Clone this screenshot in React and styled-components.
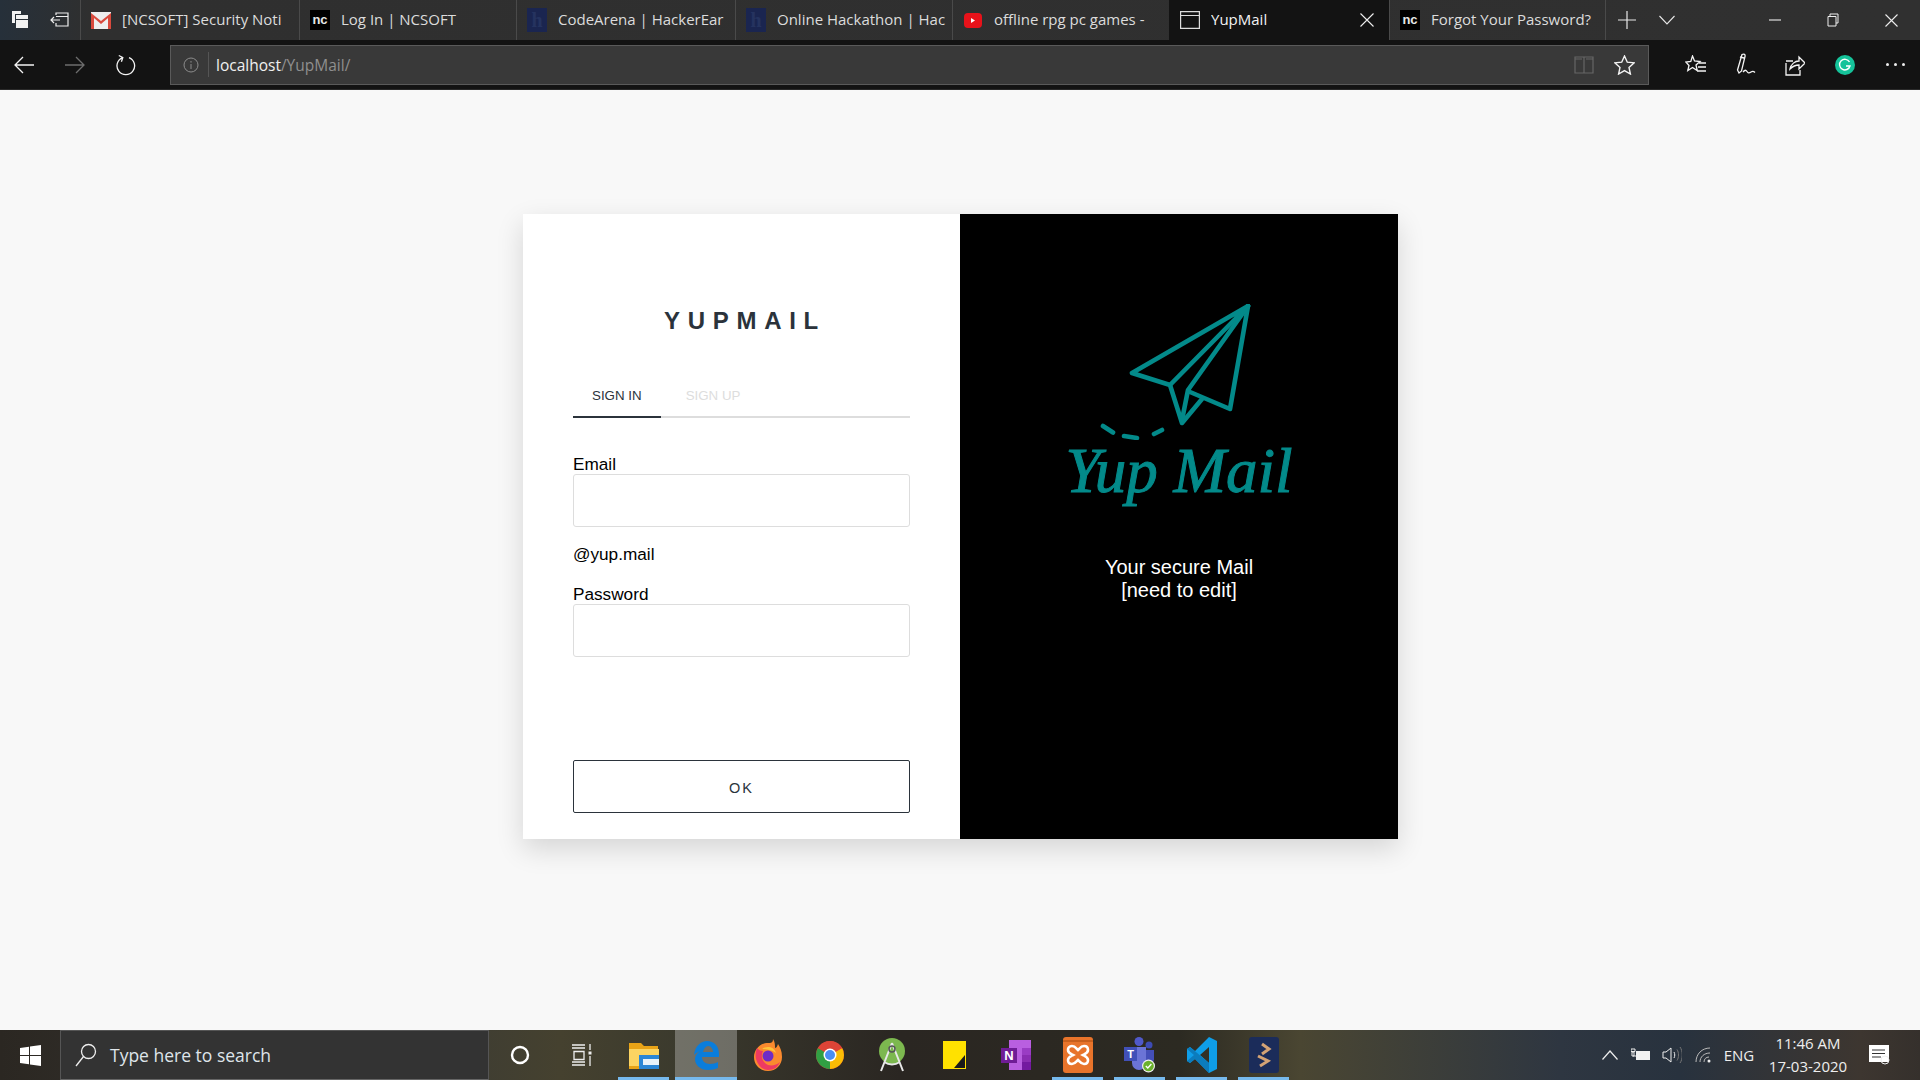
import React from 'react';
import styled, { createGlobalStyle } from 'styled-components';

const tabs = [
  { title: '[NCSOFT] Security Noti', icon: 'gmail', width: 219 },
  { title: 'Log In | NCSOFT', icon: 'nc', width: 217 },
  { title: 'CodeArena | HackerEar', icon: 'h', width: 219 },
  { title: 'Online Hackathon | Hac', icon: 'h', width: 217 },
  { title: 'offline rpg pc games -', icon: 'yt', width: 217 },
  { title: 'YupMail', icon: 'page', width: 220, active: true },
  { title: 'Forgot Your Password?', icon: 'nc', width: 216 },
];

export default function App() {
  return (
    <>
      <GlobalStyle />
      <Screen>
        <TabBar>
          <TabTools>
            <ToolIcon>
              <svg width="20" height="20" viewBox="0 0 20 20">
                <path d="M2 1h9v3H5v9H2z" fill="#f2f2f2" />
                <path d="M6 5h12v4H6zM6 10h12v8H6z" fill="#f2f2f2" />
              </svg>
            </ToolIcon>
            <ToolIcon>
              <svg width="20" height="20" viewBox="0 0 20 20" fill="none" stroke="#eee" strokeWidth="1.2">
                <path d="M6 5V3h12v13H6v-3M6 6.5h12M1 10h9M4 7l-3 3 3 3" />
              </svg>
            </ToolIcon>
          </TabTools>
          {tabs.map((tab) => (
            <Tab key={tab.title} $width={tab.width} $active={tab.active}>
              <Favicon kind={tab.icon} />
              <TabTitle $active={tab.active}>{tab.title}</TabTitle>
              {tab.active && (
                <TabClose width="14" height="14" viewBox="0 0 14 14">
                  <path d="M.5.5l13 13M13.5.5l-13 13" stroke="#eee" strokeWidth="1.1" />
                </TabClose>
              )}
            </Tab>
          ))}
          <TabActions>
            <svg width="18" height="18" viewBox="0 0 18 18">
              <path d="M9 0v18M0 9h18" stroke="#e8e8e8" strokeWidth="1.2" />
            </svg>
            <svg width="16" height="10" viewBox="0 0 16 10" fill="none">
              <path d="M.5 1L8 9l7.5-8" stroke="#e8e8e8" strokeWidth="1.1" />
            </svg>
          </TabActions>
          <WindowButtons>
            <svg width="12" height="12" viewBox="0 0 12 12">
              <path d="M0 6h12" stroke="#eee" strokeWidth="1.1" />
            </svg>
            <svg width="12" height="14" viewBox="0 0 12 14" fill="none" stroke="#eee">
              <path d="M3 3V1h8v9H9M1 3.5h8v9.5H1z" />
            </svg>
            <svg width="13" height="13" viewBox="0 0 13 13">
              <path d="M.5.5l12 12M12.5.5l-12 12" stroke="#eee" strokeWidth="1.1" />
            </svg>
          </WindowButtons>
        </TabBar>

        <Toolbar>
          <NavButtons>
            <svg width="20" height="18" viewBox="0 0 20 18" fill="none">
              <path d="M20 9H1M9 1L1 9l8 8" stroke="#f4f4f4" strokeWidth="1.3" />
            </svg>
            <svg width="20" height="18" viewBox="0 0 20 18" fill="none">
              <path d="M0 9h19M11 1l8 8-8 8" stroke="#6d6d6d" strokeWidth="1.3" />
            </svg>
            <svg width="20" height="22" viewBox="0 0 20 22" fill="none" stroke="#f4f4f4" strokeWidth="1.3">
              <path d="M13 3.6A8.8 8.8 0 1 1 6.6 3.6M2.8 1.5l4 2-1.4 4.2" />
            </svg>
          </NavButtons>
          <AddressBar>
            <svg width="16" height="16" viewBox="0 0 16 16" fill="none" stroke="#8c8c8c">
              <circle cx="8" cy="8" r="7" />
              <path d="M8 7v5M8 4v1.6" />
            </svg>
            <AddressDivider />
            <AddressText>
              localhost<AddressPath>/YupMail/</AddressPath>
            </AddressText>
            <AddressIcons>
              <svg width="20" height="18" viewBox="0 0 20 18" fill="none" stroke="#666" strokeWidth="1.2">
                <path d="M1 1h18v16H1zM10 1v16M1 3h7M12 3h7" />
              </svg>
              <svg width="21" height="20" viewBox="0 0 21 20" fill="none">
                <path d="M10.5 1l2.8 6.2 6.7.7-5 4.5 1.4 6.6-5.900-3.400L4.600 19 6 12.400 1 7.900l6.700-.7z" stroke="#f4f4f4" strokeWidth="1.4" />
              </svg>
            </AddressIcons>
          </AddressBar>
          <ToolbarRight>
            <svg width="22" height="20" viewBox="0 0 22 20" fill="none" stroke="#f4f4f4" strokeWidth="1.3">
              <path d="M7.500 1l2 5 5.500.500-4 3.500 1.200 5.500-4.700-3-4.700 3L4 10.500 0.800 7l5-.5zM14 8h7M13 12h8M12 16h9" />
            </svg>
            <svg width="20" height="24" viewBox="0 0 20 24" fill="none" stroke="#f4f4f4" strokeWidth="1.3">
              <path d="M6 1.500c2-1 3.500 0 3 2L5.500 18 3 20 1.500 17zM4 4l4 1M7 19c2-2.500 3-2 4-.5s2 2 4 .5 3-.5 4 .5" />
            </svg>
            <svg width="20" height="22" viewBox="0 0 20 22" fill="none" stroke="#f4f4f4" strokeWidth="1.3">
              <path d="M1 9v12h14v-5M8 7H1M5 15c1-5 5-8 9-8V3l6 6-6 6v-4c-3 0-6 1-9 4z" />
            </svg>
            <GrammarlyBadge>
              <svg width="14" height="14" viewBox="0 0 14 14" fill="none">
                <path d="M11.500 4A5.300 5.300 0 1 0 12 8H8" stroke="#fff" strokeWidth="1.400" />
              </svg>
            </GrammarlyBadge>
            <MoreDots>
              <i />
              <i />
              <i />
            </MoreDots>
          </ToolbarRight>
        </Toolbar>

        <Page>
          <Card>
            <FormPanel>
              <Title>YUPMAIL</Title>
              <AuthTabs>
                <AuthTab $active>SIGN IN</AuthTab>
                <AuthTab>SIGN UP</AuthTab>
              </AuthTabs>
              <Label htmlFor="email">Email</Label>
              <Input id="email" type="text" />
              <Domain>@yup.mail</Domain>
              <Label htmlFor="password">Password</Label>
              <Input id="password" type="password" />
              <SubmitButton>OK</SubmitButton>
            </FormPanel>
            <BrandPanel>
              <PlaneLogo width="154" height="136" viewBox="60 24 154 136" fill="none" stroke="#038a8a" strokeLinejoin="round" strokeLinecap="round">
                <g strokeWidth="4.600">
                  <path d="M208 26L92 93l38 12z" />
                  <path d="M130 105l12 38 20-24" />
                  <path d="M208 26l-18 103-40-17" />
                  <path d="M208 26l-60 84-6 30" />
                </g>
                <path d="M63 146l10 6.500M84 156l13 2M114 154l8-4" strokeWidth="4.600" />
              </PlaneLogo>
              <LogoText>Yup Mail</LogoText>
              <Tagline>
                Your secure Mail
                <br />
                [need to edit]
              </Tagline>
            </BrandPanel>
          </Card>
        </Page>

        <Taskbar>
          <StartButton>
            <svg width="21" height="21" viewBox="0 0 21 21" fill="#fff">
              <path d="M0 3l9-1.300V10H0zM10 1.500L21 0v10H10zM0 11h9v8.300L0 18zM10 11h11v10l-11-1.500z" />
            </svg>
          </StartButton>
          <SearchBox>
            <svg width="22" height="24" viewBox="0 0 22 24" fill="none" stroke="#eee" strokeWidth="1.300">
              <circle cx="13.500" cy="8.500" r="7" />
              <path d="M8.500 13.500L1 23" />
            </svg>
            <SearchText>Type here to search</SearchText>
          </SearchBox>
          <TaskSlots>
            <TaskSlot>
              <svg width="20" height="20" viewBox="0 0 20 20" fill="none">
                <circle cx="10" cy="10" r="8" stroke="#fff" strokeWidth="2.400" />
              </svg>
            </TaskSlot>
            <TaskSlot>
              <svg width="20" height="22" viewBox="0 0 20 22" fill="none" stroke="#eee" strokeWidth="1.300">
                <path d="M0 1h13M0 4h13M2 7.500h10v8H2zM0 18h13M0 21h13M18 0v6M18 12v10" />
                <path d="M18 7.500v3" strokeWidth="3" />
              </svg>
            </TaskSlot>
            <TaskSlot $open>
              <svg width="30" height="27" viewBox="0 0 30 27">
                <path d="M0 1h12l3 3h14v4H0z" fill="#e8a317" />
                <path d="M0 7h30v20H0z" fill="#fcd462" />
                <path d="M10 13h20v14H10z" fill="#2b86d6" />
                <path d="M14 17h16v6H14z" fill="#e8f2fa" />
                <path d="M0 24h10v3H0z" fill="#e8a317" />
              </svg>
            </TaskSlot>
            <TaskSlot $open $active>
              <svg width="28" height="30" viewBox="0 0 28 30" fill="none">
                <path d="M2 15C3 6 9 1 15 1c7 0 12 5 12 13v3H10c0 4 3 7 8 7 3 0 6-1 8-2v6c-3 1-6 2-10 2C8 30 3 25 3 19c0-3 2-6 5-8-2 1-4 2-6 4zm9-3h10c0-3-2-6-5-6-2 0-4 2-5 6z" fill="#0a7ddb" />
              </svg>
            </TaskSlot>
            <TaskSlot>
              <svg width="28" height="32" viewBox="0 0 28 32">
                <path d="M14 4C6 4 0 11 0 18c0 8 6 14 14 14s14-6 14-14c0-6-2-10-4-13-1 3-2 4-3 4 0-3 0-6-2-9 0 4-2 4-5 4z" fill="#fb8a2e" />
                <path d="M3 9C2 12 1 16 2 20c2 7 7 11 12 11 6 0 10-3 12-8-3 3-8 4-12 3-5-2-8-8-5-14-3 0-4-1-6-3z" fill="#ee3a62" />
                <circle cx="14" cy="17" r="5.500" fill="#6f2cc6" />
                <path d="M8 10c4-3 12-3 14 4-4-3-9-4-14-4z" fill="#ffc43a" />
              </svg>
            </TaskSlot>
            <TaskSlot>
              <svg width="28" height="28" viewBox="0 0 28 28">
                <circle cx="14" cy="14" r="14" fill="#dc4437" />
                <path d="M14 14L26.100 7A14 14 0 0 1 14 28z" fill="#fbbc05" />
                <path d="M14 14L14 28A14 14 0 0 1 1.900 7z" fill="#319f43" />
                <path d="M14 14L1.900 7A14 14 0 0 1 26.100 7z" fill="#dc4437" />
                <circle cx="14" cy="14" r="6.500" fill="#fff" />
                <circle cx="14" cy="14" r="5" fill="#4b8ef3" />
              </svg>
            </TaskSlot>
            <TaskSlot>
              <svg width="28" height="34" viewBox="0 0 28 34" fill="none">
                <circle cx="14" cy="13" r="13" fill="#7cb84f" />
                <path d="M14 5L3 33M14 5l11 28M6 24c5 3 11 3 16 0" stroke="#e8e8e8" strokeWidth="2" />
                <circle cx="14" cy="11" r="3" stroke="#555" strokeWidth="1.500" />
              </svg>
            </TaskSlot>
            <TaskSlot>
              <svg width="23" height="28" viewBox="0 0 23 28">
                <path d="M0 0h23v28H0z" fill="#ffe100" />
                <path d="M11 27L22 14v13z" fill="#1a1a1a" />
              </svg>
            </TaskSlot>
            <TaskSlot>
              <svg width="30" height="30" viewBox="0 0 30 30">
                <path d="M8 0h22v30H8z" fill="#b95fe0" />
                <path d="M21 8h9v7h-9z" fill="#9a3cc4" />
                <path d="M21 15h9v7h-9z" fill="#8a2db2" />
                <path d="M21 22h9v8h-9z" fill="#7319a0" />
                <path d="M0 8h16v15H0z" fill="#6f1c96" />
                <text x="8" y="20" fontSize="13" fontWeight="700" fontFamily="Liberation Sans, sans-serif" fill="#fff" textAnchor="middle">N</text>
              </svg>
            </TaskSlot>
            <TaskSlot $open>
              <svg width="30" height="36" viewBox="0 0 30 36" fill="none">
                <rect width="30" height="36" rx="3" fill="#e8742b" />
                <path d="M0 4h30" stroke="#c85f1c" strokeWidth="2" />
                <path d="M9 9c-3 0-4 2-4 4 0 3 3 4 5 5-2 1-5 2-5 5 0 2 1 4 4 4s4-2 6-4c2 2 3 4 6 4s4-2 4-4c0-3-3-4-5-5 2-1 5-2 5-5 0-2-1-4-4-4s-4 2-6 4c-2-2-3-4-6-4z" stroke="#fff" strokeWidth="2.600" />
              </svg>
            </TaskSlot>
            <TaskSlot $open>
              <svg width="32" height="36" viewBox="0 0 32 36">
                <circle cx="15" cy="4.500" r="4.500" fill="#5059c9" />
                <circle cx="25" cy="8" r="3.500" fill="#3d4bb5" />
                <path d="M8 10h14v16a7 7 0 0 1-14 0z" fill="#6b74d6" />
                <path d="M22 13h8v10a5 5 0 0 1-8 2z" fill="#444fb8" />
                <path d="M0 10h13v14H0z" fill="#4150b8" />
                <text x="6.500" y="21" fontSize="11" fontWeight="700" fontFamily="Liberation Sans, sans-serif" fill="#fff" textAnchor="middle">T</text>
                <circle cx="24.500" cy="29" r="6.500" fill="#eee" />
                <circle cx="24.500" cy="29" r="5.300" fill="#6bb12c" />
                <path d="M21.800 29l2 2 3.600-4" stroke="#fff" strokeWidth="1.300" fill="none" />
              </svg>
            </TaskSlot>
            <TaskSlot $open>
              <svg width="30" height="36" viewBox="0 0 30 36">
                <path d="M22 0l8 4v28l-8 4-14-14-5 4-3-2V12l3-2 5 4zM22 10l-9 8 9 8z" fill="#0f9ee8" />
                <path d="M0 12l3-2 19 16v10L8 22l-5 4-3-2 7-6z" fill="#0b7cbd" />
              </svg>
            </TaskSlot>
            <TaskSlot $open>
              <svg width="30" height="36" viewBox="0 0 30 36" fill="none">
                <rect width="30" height="36" rx="3" fill="#1b2c5a" />
                <path d="M13 7l7 5-7 5M9 19l10 5-8 5" stroke="#d4a375" strokeWidth="3" />
              </svg>
            </TaskSlot>
          </TaskSlots>
          <Tray>
            <TrayItem>
              <svg width="16" height="10" viewBox="0 0 16 10" fill="none">
                <path d="M.5 9.500L8 1l7.500 8.500" stroke="#eee" strokeWidth="1.200" />
              </svg>
            </TrayItem>
            <TrayItem>
              <svg width="20" height="14" viewBox="0 0 20 14">
                <path d="M5 3h14v9H5z" fill="#f2f2f2" />
                <path d="M0 1h4v2.500H0zM1 4h2v4H1zM2 8h3" stroke="#eee" fill="none" />
              </svg>
            </TrayItem>
            <TrayItem>
              <svg width="20" height="18" viewBox="0 0 20 18" fill="none">
                <path d="M1 6h3l5-4v14l-5-4H1z" stroke="#eee" />
                <path d="M12 6c1 2 1 4 0 6" stroke="#eee" />
                <path d="M15 3.500c2 3 2 8 0 11M18 1c3 4 3 12 0 16" stroke="#777" />
              </svg>
            </TrayItem>
            <TrayItem>
              <svg width="17" height="16" viewBox="0 0 17 16" fill="none" stroke="#bbb">
                <path d="M1 15C1 7 7 1 15 1M5 15c0-5 4-9 10-9M9 15c0-3 2-5 5-5" />
                <circle cx="14" cy="14" r="1.500" fill="#eee" stroke="none" />
              </svg>
            </TrayItem>
            <Lang>ENG</Lang>
            <Clock>
              <span>11:46 AM</span>
              <span>17-03-2020</span>
            </Clock>
            <Notify>
              <svg width="21" height="20" viewBox="0 0 21 20">
                <path d="M0 0h20v17H0z" fill="#fff" />
                <path d="M3 5h13M3 8.500h13M3 12h9" stroke="#333" />
                <circle cx="16" cy="15" r="4" fill="none" stroke="#eee" />
              </svg>
            </Notify>
          </Tray>
        </Taskbar>
      </Screen>
    </>
  );
}

function Favicon({ kind }) {
  if (kind === 'gmail') {
    return (
      <FaviconBox>
        <svg width="20" height="17" viewBox="0 0 20 17">
          <path d="M0 0h20v17H0z" fill="#eee" />
          <path d="M0 1l10 8 10-8v16h-3V6l-7 6-7-6v11H0z" fill="#d94a3d" />
        </svg>
      </FaviconBox>
    );
  }
  if (kind === 'nc') {
    return <NcMark>nc</NcMark>;
  }
  if (kind === 'h') {
    return <HMark>h</HMark>;
  }
  if (kind === 'yt') {
    return (
      <FaviconBox>
        <svg width="18" height="15" viewBox="0 0 18 15">
          <rect width="18" height="15" rx="4" fill="#e8121a" />
          <path d="M7 5l4 2.500L7 10z" fill="#fff" />
        </svg>
      </FaviconBox>
    );
  }
  return (
    <FaviconBox>
      <svg width="20" height="20" viewBox="0 0 20 20" fill="none" stroke="#ddd" strokeWidth="1.200">
        <path d="M.6 1.600h18.800v16.800H.6zM.6 5.500h18.800" />
      </svg>
    </FaviconBox>
  );
}

const GlobalStyle = createGlobalStyle`
  html, body {
    margin: 0;
    padding: 0;
    background: #f8f8f8;
  }
  * {
    box-sizing: border-box;
  }
`;

const Screen = styled.div`
  width: 1920px;
  height: 1080px;
  display: flex;
  flex-direction: column;
  overflow: hidden;
  font-family: 'Liberation Sans', Arial, sans-serif;
`;

const TabBar = styled.div`
  height: 40px;
  flex: none;
  display: flex;
  background: linear-gradient(90deg, #26303a 0, #2f2f2f 90px, #303030 100%);
  font-family: 'Open Sans', sans-serif;
`;

const TabTools = styled.div`
  width: 80px;
  display: flex;
  align-items: center;
  padding-left: 10px;
  gap: 20px;
`;

const ToolIcon = styled.span`
  display: flex;
  width: 20px;
`;

const Tab = styled.div`
  width: ${(p) => p.$width}px;
  flex: none;
  display: flex;
  align-items: center;
  padding-left: 10px;
  gap: 11px;
  border-left: 1px solid ${(p) => (p.$active ? '#131313' : '#4a4a4a')};
  background: ${(p) => (p.$active ? '#131313' : 'transparent')};
  position: relative;
`;

const FaviconBox = styled.span`
  width: 20px;
  height: 20px;
  flex: none;
  display: flex;
  align-items: center;
  justify-content: center;
`;

const NcMark = styled.span`
  width: 20px;
  height: 20px;
  flex: none;
  background: #000;
  color: #e8e8e8;
  font: 700 13px/19px 'Liberation Sans', sans-serif;
  text-align: center;
`;

const HMark = styled.span`
  width: 20px;
  height: 24px;
  flex: none;
  background: #1a2550;
  color: #25335f;
  font: 700 20px/24px 'Liberation Serif', serif;
  text-align: center;
`;

const TabTitle = styled.span`
  flex: 1;
  min-width: 0;
  margin: -2px ${(p) => (p.$active ? '40px' : '0')} 0 0;
  overflow: hidden;
  white-space: nowrap;
  font-size: 15px;
  color: ${(p) => (p.$active ? '#f2f2f2' : '#dcdcdc')};
`;

const TabClose = styled.svg`
  position: absolute;
  right: 15px;
  top: 13px;
`;

const TabActions = styled.div`
  width: 82px;
  display: flex;
  align-items: center;
  border-left: 1px solid #4a4a4a;
  padding-left: 12px;
  gap: 23px;
`;

const WindowButtons = styled.div`
  flex: 1;
  display: flex;
  align-items: center;
  justify-content: flex-end;
  gap: 46px;
  padding-right: 22px;
`;

const Toolbar = styled.div`
  height: 50px;
  flex: none;
  display: flex;
  align-items: center;
  background: #131313;
  border-bottom: 1px solid #2a2a2a;
`;

const NavButtons = styled.div`
  width: 170px;
  display: flex;
  align-items: center;
  gap: 31px;
  padding-left: 14px;
`;

const AddressBar = styled.div`
  width: 1479px;
  height: 40px;
  display: flex;
  align-items: center;
  background: #393939;
  border: 1px solid #5a5a5a;
  padding: 0 13px 0 12px;
`;

const AddressDivider = styled.span`
  width: 1px;
  height: 25px;
  background: #555;
  margin: 0 7px 0 9px;
`;

const AddressText = styled.span`
  flex: 1;
  padding-top: 1px;
  font: 15.500px 'Open Sans', sans-serif;
  color: #f0f0f0;
`;

const AddressPath = styled.span`
  color: #8f8f8f;
`;

const AddressIcons = styled.div`
  display: flex;
  align-items: center;
  gap: 20px;
`;

const ToolbarRight = styled.div`
  flex: 1;
  display: flex;
  align-items: center;
  padding-left: 36px;
  gap: 29px;
`;

const GrammarlyBadge = styled.span`
  width: 20px;
  height: 20px;
  margin-left: 1px;
  border-radius: 50%;
  background: #15c39a;
  display: flex;
  align-items: center;
  justify-content: center;
`;

const MoreDots = styled.span`
  display: flex;
  gap: 5px;
  margin-left: 2px;

  i {
    width: 3px;
    height: 3px;
    border-radius: 50%;
    background: #eee;
  }
`;

const Page = styled.main`
  flex: 1;
  min-height: 0;
  padding: 124px 0 0 523px;
  background: #f8f8f8;
`;

const Card = styled.div`
  width: 875px;
  height: 625px;
  display: flex;
  box-shadow: 0 10px 26px rgba(0, 0, 0, 0.14);
`;

const FormPanel = styled.form`
  width: 437px;
  padding: 93px 50px 0;
  display: flex;
  flex-direction: column;
  background: #fff;
  color: #000;
`;

const Title = styled.h1`
  margin: 0;
  font-size: 24px;
  line-height: 28px;
  font-weight: 700;
  letter-spacing: 7.7px;
  text-align: center;
  padding-left: 7px;
  color: #2b333b;
`;

const AuthTabs = styled.div`
  margin-top: 39px;
  height: 44px;
  display: flex;
  gap: 6px;
  border-bottom: 2px solid #ddd;
`;

const AuthTab = styled.div`
  height: 44px;
  padding: 14px 19px 0;
  font-size: 13.330px;
  line-height: 16px;
  color: ${(p) => (p.$active ? '#2b333b' : '#ddd')};
  border-bottom: 2px solid ${(p) => (p.$active ? '#2b333b' : '#ddd')};
`;

const Label = styled.label`
  margin-top: 36px;
  font-size: 17.200px;
  line-height: 20px;
  display: block;

  & ~ & {
    margin-top: 0;
  }
`;

const Input = styled.input`
  display: block;
  width: 100%;
  height: 53px;
  border: 1px solid #ddd;
  border-radius: 3px;
  background: #fff;
  outline: none;
  flex: none;
`;

const Domain = styled.div`
  margin: 17px 0 20px;
  font-size: 17.200px;
  line-height: 20px;
`;

const SubmitButton = styled.button`
  margin-top: 103px;
  height: 53px;
  flex: none;
  padding-top: 3px;
  background: #fff;
  border: 1px solid #2b333b;
  border-radius: 2px;
  color: #2b333b;
  font: 14.500px 'Liberation Sans', sans-serif;
  letter-spacing: 2px;
`;

const BrandPanel = styled.div`
  flex: 1;
  background: #000;
  display: flex;
  flex-direction: column;
  align-items: center;
  padding-top: 90px;
`;

const PlaneLogo = styled.svg`
  display: block;
  margin-right: 5px;
  flex: none;
`;

const LogoText = styled.div`
  margin-top: -5px;
  font: italic 400 63px/72px 'Liberation Serif', serif;
  -webkit-text-stroke: 1px #038a8a;
  color: #038a8a;
  white-space: nowrap;
`;

const Tagline = styled.p`
  margin: 49px 0 0;
  font-size: 20px;
  line-height: 23px;
  text-align: center;
  color: #fff;
`;

const Taskbar = styled.footer`
  height: 50px;
  flex: none;
  display: flex;
  align-items: stretch;
  color: #eee;
  background: linear-gradient(
    90deg,
    #2b2722 0,
    #3a3a35 400px,
    #45412f 560px,
    #3b3a2d 680px,
    #2a2622 900px,
    #2c2a22 1180px,
    #4a4632 1300px,
    #2e3641 1560px,
    #28323e 1680px,
    #3d3630 1860px,
    #35302c 100%
  );
`;

const StartButton = styled.div`
  width: 60px;
  display: flex;
  align-items: center;
  justify-content: center;
`;

const SearchBox = styled.div`
  width: 429px;
  display: flex;
  align-items: center;
  padding-left: 14px;
  gap: 13px;
  background: #333;
  border: 1px solid #555;
  border-bottom-color: #666;
`;

const SearchText = styled.span`
  font: 17.500px 'Open Sans', sans-serif;
  color: #dfe5ea;
`;

const TaskSlots = styled.div`
  display: flex;
`;

const TaskSlot = styled.div`
  width: 62px;
  display: flex;
  align-items: center;
  justify-content: center;
  background: ${(p) => (p.$active ? 'rgba(255,255,255,0.28)' : 'transparent')};
  position: relative;

  &::after {
    content: '';
    display: ${(p) => (p.$open ? 'block' : 'none')};
    position: absolute;
    left: ${(p) => (p.$active ? '0' : '5px')};
    right: ${(p) => (p.$active ? '0' : '6px')};
    bottom: 0;
    height: 3px;
    background: #76b9ed;
  }
`;

const Tray = styled.div`
  flex: 1;
  display: flex;
  align-items: center;
  justify-content: flex-end;
  padding-right: 30px;
`;

const TrayItem = styled.span`
  width: 30px;
  display: flex;
  justify-content: center;
  margin-right: 1px;
`;

const Lang = styled.span`
  font: 15px 'Open Sans', sans-serif;
  width: 40px;
  text-align: center;
`;

const Clock = styled.div`
  width: 96px;
  margin-left: 1px;
  display: flex;
  flex-direction: column;
  align-items: center;
  font: 15px/23px 'Open Sans', sans-serif;
`;

const Notify = styled.span`
  display: flex;
  margin-left: 13px;
`;
